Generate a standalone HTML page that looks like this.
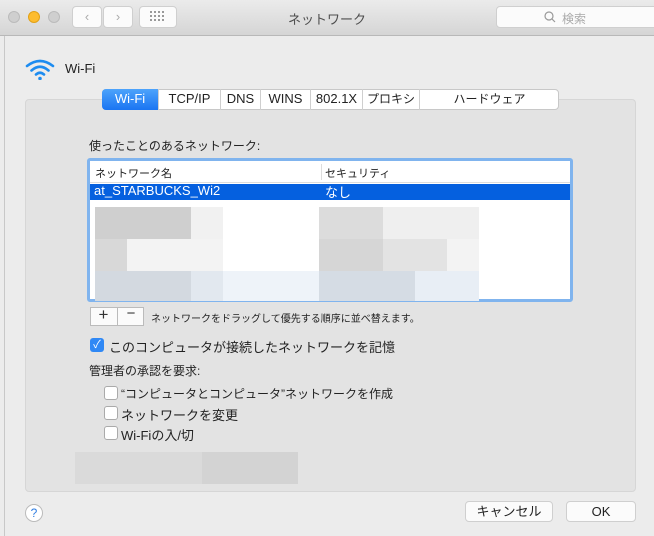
<!DOCTYPE html>
<html><head><meta charset="utf-8"><style>
*{margin:0;padding:0;box-sizing:border-box}
body{width:654px;height:536px;overflow:hidden;background:#ececec;font-family:"Liberation Sans","Noto Sans CJK JP",sans-serif;font-size:13px;color:#222;position:relative}
.abs{position:absolute}
.title{left:0;top:0;width:654px;height:36px;background:linear-gradient(#ebebeb,#d5d5d5);border-bottom:1px solid #b8b8b8}
.dot{width:12px;height:12px;border-radius:50%;top:11px}
.btn{background:#fbfbfb;border:1px solid #cfcfcf;border-radius:4px}
.tab{top:89px;height:21px;line-height:20px;text-align:center;border-right:1px solid #cfcfcf;font-size:12px;white-space:nowrap}
.cb{width:14px;height:14px;border:1px solid #aaa;border-radius:3px;background:#fff}
.px{position:absolute}
</style></head><body>
<div class="abs title"></div>
<div class="abs dot" style="left:8px;background:#cfcfcf;border:1px solid #bbb"></div>
<div class="abs dot" style="left:28px;background:#fdbc2e;border:1px solid #e1a116"></div>
<div class="abs dot" style="left:48px;background:#cfcfcf;border:1px solid #bbb"></div>
<div class="abs btn" style="left:72px;top:6px;width:30px;height:22px;color:#aaa;text-align:center;line-height:20px">&#x2039;</div>
<div class="abs btn" style="left:103px;top:6px;width:30px;height:22px;color:#aaa;text-align:center;line-height:20px">&#x203A;</div>
<div class="abs btn" style="left:139px;top:6px;width:38px;height:22px"></div>
<svg class="abs" style="left:150px;top:11px" width="16" height="12"><g fill="#999"><rect x="0" y="0" width="2" height="2"/><rect x="4" y="0" width="2" height="2"/><rect x="8" y="0" width="2" height="2"/><rect x="12" y="0" width="2" height="2"/><rect x="0" y="4" width="2" height="2"/><rect x="4" y="4" width="2" height="2"/><rect x="8" y="4" width="2" height="2"/><rect x="12" y="4" width="2" height="2"/><rect x="0" y="8" width="2" height="2"/><rect x="4" y="8" width="2" height="2"/><rect x="8" y="8" width="2" height="2"/><rect x="12" y="8" width="2" height="2"/></g></svg>
<div class="abs" style="left:0;width:654px;top:9px;text-align:center;color:#4d4d4d;font-size:13px">ネットワーク</div>
<div class="abs btn" style="left:496px;top:6px;width:170px;height:22px"></div>
<svg class="abs" style="left:544px;top:11px" width="12" height="12"><circle cx="5" cy="5" r="4" fill="none" stroke="#999" stroke-width="1.2"/><line x1="8" y1="8" x2="11" y2="11" stroke="#999" stroke-width="1.2"/></svg>
<div class="abs" style="left:562px;top:10px;color:#aaa;font-size:12px">検索</div>
<div class="abs" style="left:4px;top:36px;width:1px;height:500px;background:#c8c8c8"></div>

<svg class="abs" style="left:25px;top:58px" width="30" height="22" viewBox="0 0 30 22"><g fill="none" stroke="#1d8cf0" stroke-width="2.6" stroke-linecap="round"><path d="M2 8 Q15 -2 28 8"/><path d="M6.5 12.5 Q15 5 23.5 12.5"/><path d="M11 16.5 Q15 13 19 16.5"/></g><circle cx="15" cy="20.5" r="1.8" fill="#1d8cf0"/></svg>
<div class="abs" style="left:65px;top:61px;font-size:13px">Wi-Fi</div>

<div class="abs" style="left:25px;top:99px;width:611px;height:393px;background:#e3e3e3;border:1px solid #d6d6d6;border-radius:4px"></div>
<div class="abs" style="left:102px;top:89px;width:457px;height:21px;background:#fff;border:1px solid #c8c8c8;border-radius:4px;overflow:hidden"></div>
<div class="abs tab" style="left:102px;width:57px;background:linear-gradient(#4da3fb,#1a75f2);color:#fff;border-radius:4px 0 0 4px;font-size:13px">Wi-Fi</div>
<div class="abs tab" style="left:159px;width:62px;font-size:13px">TCP/IP</div>
<div class="abs tab" style="left:221px;width:40px;font-size:13px">DNS</div>
<div class="abs tab" style="left:261px;width:50px;font-size:13px">WINS</div>
<div class="abs tab" style="left:311px;width:52px;font-size:13px">802.1X</div>
<div class="abs tab" style="left:363px;width:57px">プロキシ</div>
<div class="abs tab" style="left:420px;width:139px;border-right:none">ハードウェア</div>

<div class="abs" style="left:89px;top:137px;font-size:12px">使ったことのあるネットワーク:</div>
<div class="abs" style="left:87px;top:158px;width:486px;height:144px;border:3px solid #80b4ee;border-radius:3px;background:#fff"></div>
<div class="abs" style="left:90px;top:161px;width:480px;height:22px;border-bottom:1px solid #ddd"></div>
<div class="abs" style="left:321px;top:164px;width:1px;height:16px;background:#ddd"></div>
<div class="abs" style="left:95px;top:165px;font-size:11px">ネットワーク名</div>
<div class="abs" style="left:325px;top:165px;font-size:11px">セキュリティ</div>
<div class="abs" style="left:90px;top:184px;width:480px;height:16px;background:#0560df"></div>
<div class="abs" style="left:94px;top:183px;color:#fff;font-size:13px">at_STARBUCKS_Wi2</div>
<div class="abs" style="left:325px;top:182px;color:#fff;font-size:13px">なし</div>
<div class="px" style="left:95px;top:207px;width:96px;height:32px;background:#cfcfcf"></div>
<div class="px" style="left:191px;top:207px;width:32px;height:32px;background:#f1f1f1"></div>
<div class="px" style="left:95px;top:239px;width:32px;height:32px;background:#d8d8d8"></div>
<div class="px" style="left:127px;top:239px;width:96px;height:32px;background:#f3f3f3"></div>
<div class="px" style="left:95px;top:271px;width:96px;height:30px;background:#d3d9e0"></div>
<div class="px" style="left:191px;top:271px;width:32px;height:30px;background:#e2e8ef"></div>
<div class="px" style="left:223px;top:271px;width:96px;height:30px;background:#eef3f9"></div>
<div class="px" style="left:319px;top:207px;width:64px;height:32px;background:#dcdcdc"></div>
<div class="px" style="left:383px;top:207px;width:96px;height:32px;background:#efefef"></div>
<div class="px" style="left:319px;top:239px;width:64px;height:32px;background:#d6d6d6"></div>
<div class="px" style="left:383px;top:239px;width:64px;height:32px;background:#e3e3e3"></div>
<div class="px" style="left:447px;top:239px;width:32px;height:32px;background:#f3f3f3"></div>
<div class="px" style="left:319px;top:271px;width:96px;height:30px;background:#d5dce4"></div>
<div class="px" style="left:415px;top:271px;width:64px;height:30px;background:#e8eef5"></div>

<div class="abs" style="left:90px;top:307px;width:54px;height:19px;background:#fbfbfb;border:1px solid #bbb"></div>
<div class="abs" style="left:117px;top:307px;width:1px;height:19px;background:#bbb"></div>
<div class="abs" style="left:90px;top:305px;width:27px;text-align:center;font-size:17px;color:#333">+</div>
<div class="abs" style="left:118px;top:305px;width:26px;text-align:center;font-size:15px;color:#333">−</div>
<div class="abs" style="left:151px;top:310px;font-size:10px">ネットワークをドラッグして優先する順序に並べ替えます。</div>

<div class="abs" style="left:90px;top:338px;width:14px;height:14px;border-radius:3px;background:#2f88f5;color:#fff;font-size:11px;line-height:14px;text-align:center">✓</div>
<div class="abs" style="left:109px;top:337px">このコンピュータが接続したネットワークを記憶</div>
<div class="abs" style="left:89px;top:362px;font-size:12px">管理者の承認を要求:</div>
<div class="abs cb" style="left:104px;top:386px"></div>
<div class="abs" style="left:121px;top:385px;font-size:12px">“コンピュータとコンピュータ”ネットワークを作成</div>
<div class="abs cb" style="left:104px;top:406px"></div>
<div class="abs" style="left:121px;top:405px">ネットワークを変更</div>
<div class="abs cb" style="left:104px;top:426px"></div>
<div class="abs" style="left:121px;top:425px">Wi-Fiの入/切</div>
<div class="px" style="left:75px;top:452px;width:127px;height:32px;background:#dadada"></div>
<div class="px" style="left:202px;top:452px;width:96px;height:32px;background:#d3d3d3"></div>

<div class="abs" style="left:25px;top:504px;width:18px;height:18px;border-radius:50%;background:#fff;border:1px solid #bbb;color:#2f7de1;text-align:center;line-height:16px;font-size:12px">?</div>
<div class="abs btn" style="left:465px;top:501px;width:88px;height:21px;text-align:center;line-height:19px">キャンセル</div>
<div class="abs btn" style="left:566px;top:501px;width:70px;height:21px;text-align:center;line-height:19px">OK</div>
</body></html>
